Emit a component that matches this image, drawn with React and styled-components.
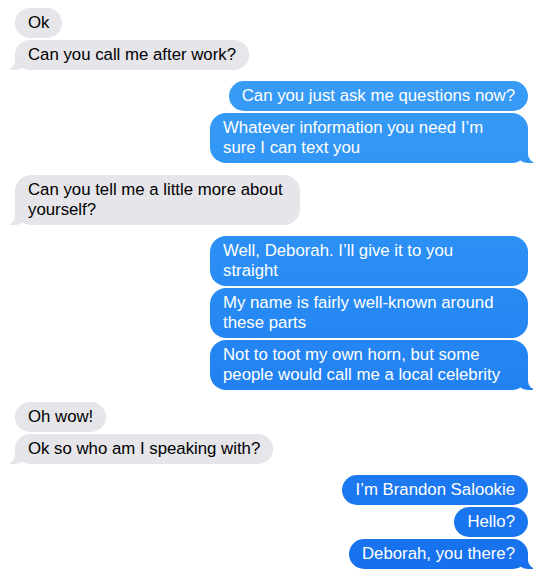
import React from 'react'
import styled, { createGlobalStyle, css } from 'styled-components'

const GlobalStyle = createGlobalStyle`
  html, body {
    margin: 0;
    background: #fff;
  }
  body {
    font-family: "Liberation Sans", Arial, sans-serif;
    -webkit-font-smoothing: antialiased;
  }
`

const BLUE = 'linear-gradient(180deg, #3ea2f8 0%, #2a8ef4 45%, #1670ee 100%) fixed'
const GRAY = '#e5e5ea'

const Thread = styled.div`
  display: flex;
  flex-direction: column;
  gap: 11.4px;
  padding: 8px 12px 0 15px;
`

const Group = styled.div`
  display: flex;
  flex-direction: column;
  align-items: ${({ $mine }) => ($mine ? 'flex-end' : 'flex-start')};
  gap: 2px;
`

const Bubble = styled.div`
  position: relative;
  box-sizing: border-box;
  width: ${({ $width }) => ($width ? `${$width}px` : 'fit-content')};
  padding: 5px 13px;
  border-radius: 16px;
  font-size: 16.8px;
  line-height: 20px;
  color: ${({ $mine }) => ($mine ? '#fff' : '#000')};
  background: ${({ $mine }) => ($mine ? BLUE : GRAY)};

  ${({ $tail, $mine }) =>
    $tail &&
    css`
      &::before {
        content: '';
        position: absolute;
        bottom: 0;
        ${$mine ? 'right: -5px;' : 'left: -5px;'}
        width: 18px;
        height: 16px;
        background: inherit;
        ${$mine
          ? 'border-bottom-left-radius: 14px 12px;'
          : 'border-bottom-right-radius: 14px 12px;'}
      }
      &::after {
        content: '';
        position: absolute;
        bottom: 0;
        ${$mine ? 'right: -22px;' : 'left: -22px;'}
        width: 22px;
        height: 18px;
        background: #fff;
        ${$mine
          ? 'border-bottom-left-radius: 9px;'
          : 'border-bottom-right-radius: 9px;'}
      }
    `}
`

const Line = styled.span`
  display: block;
  white-space: nowrap;
`

const thread = [
  { mine: false, messages: [['Ok'], ['Can you call me after work?']] },
  {
    mine: true,
    messages: [
      ['Can you just ask me questions now?'],
      ['Whatever information you need I\u2019m', 'sure I can text you'],
    ],
  },
  { mine: false, messages: [['Can you tell me a little more about', 'yourself?']] },
  {
    mine: true,
    messages: [
      ['Well, Deborah. I\u2019ll give it to you', 'straight'],
      ['My name is fairly well-known around', 'these parts'],
      ['Not to toot my own horn, but some', 'people would call me a local celebrity'],
    ],
  },
  { mine: false, messages: [['Oh wow!'], ['Ok so who am I speaking with?']] },
  {
    mine: true,
    messages: [['I\u2019m Brandon Salookie'], ['Hello?'], ['Deborah, you there?']],
  },
]

const App = () => (
  <>
    <GlobalStyle />
    <Thread>
      {thread.map(({ mine, messages }, gi) => (
        <Group key={gi} $mine={mine}>
          {messages.map((lines, mi) => (
            <Bubble
              key={mi}
              $mine={mine}
              $tail={mi === messages.length - 1}
              $width={lines.length > 1 ? (mine ? 318 : 285) : null}
            >
              {lines.map(line => (
                <Line key={line}>{line}</Line>
              ))}
            </Bubble>
          ))}
        </Group>
      ))}
    </Thread>
  </>
)

export default App
